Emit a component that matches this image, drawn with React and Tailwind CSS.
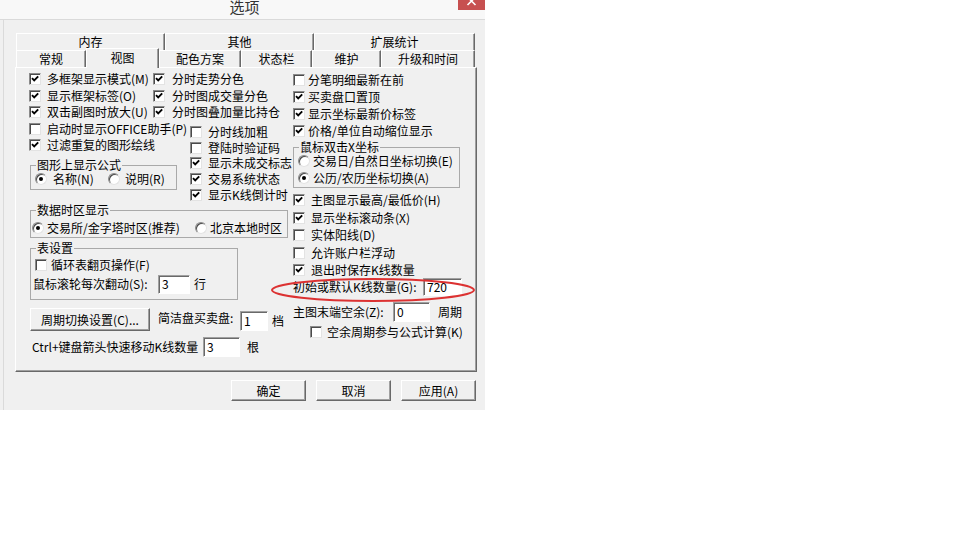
function Box({ on }) {
  return (
    <span className="w-[12px] h-[12px] shrink-0 bg-white border border-t-[#8a8a8a] border-l-[#8a8a8a] border-b-[#e3e3e3] border-r-[#e3e3e3] shadow-[inset_1px_1px_0_#4a4a4a] flex items-center justify-center">
      {on && (
        <svg width="10" height="10" viewBox="0 0 10 10">
          <path d="M2 4.2 4.2 6.4 8.2 2.4" fill="none" stroke="#000" strokeWidth="1.9" />
        </svg>
      )}
    </span>
  );
}

function Radio({ on }) {
  return (
    <span className="w-[12px] h-[12px] shrink-0 rounded-full bg-white border border-t-[#8a8a8a] border-l-[#8a8a8a] border-b-[#e3e3e3] border-r-[#e3e3e3] shadow-[inset_1px_1px_0_#4a4a4a] flex items-center justify-center">
      {on && <span className="w-[4px] h-[4px] rounded-full bg-black" />}
    </span>
  );
}

function Check({ on, label, gap = 'ml-[5px]', className = '' }) {
  return (
    <div className={`flex items-center shrink-0 ${className}`}>
      <Box on={on} />
      <span className={`whitespace-nowrap ${gap}`}>{label}</span>
    </div>
  );
}

function Field({ value, className = '' }) {
  return (
    <div className={`shrink-0 bg-white border border-t-[#a0a0a0] border-l-[#a0a0a0] border-b-white border-r-white shadow-[inset_1px_1px_0_#696969] pl-[3px] flex items-center ${className}`}>
      {value}
    </div>
  );
}

function Group({ title, className = '', children }) {
  return (
    <fieldset className={`border border-[#a9a9a9] shrink-0 ${className}`}>
      <legend className="ml-[5px] px-[1px] leading-[12px]">{title}</legend>
      {children}
    </fieldset>
  );
}

const TAB = 'flex items-center justify-center bg-[#f0f0f0] border-t border-l border-r border-t-white border-l-white border-r-[#696969] shadow-[inset_-1px_0_0_#a0a0a0]';
const BTN = 'w-[75px] h-full flex items-center justify-center bg-[#f0f0f0] border border-t-white border-l-white border-b-[#696969] border-r-[#696969] shadow-[inset_-1px_-1px_0_#a0a0a0]';

export default function App() {
  return (
    <div className="w-[960px] h-[540px] bg-white font-['Noto_Sans_CJK_SC',sans-serif] text-[12px] text-black leading-[14px]">
      <div className="w-[485px] h-[410px] bg-[#f0f0f0] flex flex-col">
        {/* title bar */}
        <div className="h-[20px] shrink-0 bg-[#f8f8f8] border-b border-[#dadada] grid grid-cols-[1fr_auto_1fr] items-start">
          <div />
          <div className="text-[15px] leading-[14px] text-[#333] ml-[4px]">选项</div>
          <div className="justify-self-end w-[27px] h-[10px] bg-[#c75050] flex justify-center overflow-hidden">
            <svg width="27" height="10" viewBox="0 0 27 10">
              <path d="M9.5 -3 17.5 5M17.5 -3 9.5 5" stroke="#fff" strokeWidth="1.6" />
            </svg>
          </div>
        </div>

        <div className="flex-1 ml-[3px] border-l border-[#dadada] flex flex-col">
          {/* tabs, back row */}
          <div className="mt-[13px] ml-[12px] w-[459px] h-[17px] flex">
            <div className={`${TAB} w-[149px]`}>内存</div>
            <div className={`${TAB} w-[149px]`}>其他</div>
            <div className={`${TAB} w-[161px]`}>扩展统计</div>
          </div>
          {/* tabs, front row */}
          <div className="ml-[12px] w-[459px] h-[17px] flex items-start">
            <div className={`${TAB} w-[70px] h-[17px]`}>常规</div>
            <div className={`${TAB} w-[73px] h-[20px] -mt-[2px] pb-[2px] relative z-10`}>视图</div>
            <div className={`${TAB} w-[82px] h-[17px]`}>配色方案</div>
            <div className={`${TAB} w-[71px] h-[17px]`}>状态栏</div>
            <div className={`${TAB} w-[69px] h-[17px]`}>维护</div>
            <div className={`${TAB} w-[94px] h-[17px]`}>升级和时间</div>
          </div>

          {/* page */}
          <div className="ml-[11px] w-[462px] h-[305px] shrink-0 relative flex border border-t-white border-l-white border-b-[#696969] border-r-[#696969] shadow-[inset_-1px_-1px_0_#a0a0a0]">
            {/* left area */}
            <div className="w-[274px] shrink-0 flex flex-col">
              <div className="mt-[3px] flex flex-col">
                <div className="h-[16.5px] flex items-center">
                  <Check on label="多框架显示模式(M)" gap="ml-[6px]" className="ml-[13px] w-[124px]" />
                  <Check on label="分时走势分色" gap="ml-[7px]" />
                </div>
                <div className="h-[16.5px] flex items-center">
                  <Check on label="显示框架标签(O)" gap="ml-[6px]" className="ml-[13px] w-[124px]" />
                  <Check on label="分时图成交量分色" gap="ml-[7px]" />
                </div>
                <div className="h-[16.5px] flex items-center">
                  <Check on label="双击副图时放大(U)" gap="ml-[6px]" className="ml-[13px] w-[124px]" />
                  <Check on label="分时图叠加量比持仓" gap="ml-[7px]" />
                </div>
              </div>

              <div className="h-[83.5px] shrink-0 flex">
                <div className="w-[174px] shrink-0 flex flex-col">
                  <div className="h-[16.5px] flex items-center">
                    <Check label="启动时显示OFFICE助手(P)" gap="ml-[6px]" className="ml-[13px]" />
                  </div>
                  <div className="h-[16.5px] flex items-center">
                    <Check on label="过滤重复的图形绘线" gap="ml-[6px]" className="ml-[13px]" />
                  </div>
                  <Group title="图形上显示公式" className="mt-[5.5px] ml-[14px] w-[147px] pb-[2px]">
                    <div className="h-[16px] flex items-center">
                      <div className="w-[77px] flex items-center">
                        <span className="ml-[4px]"><Radio on /></span>
                        <span className="ml-[6px]">名称(N)</span>
                      </div>
                      <Radio />
                      <span className="ml-[5px]">说明(R)</span>
                    </div>
                  </Group>
                </div>
                <div className="mt-[3.5px] flex flex-col">
                  <div className="h-[15.75px] flex items-center"><Check label="分时线加粗" gap="ml-[6px]" /></div>
                  <div className="h-[15.75px] flex items-center"><Check label="登陆时验证码" gap="ml-[6px]" /></div>
                  <div className="h-[15.75px] flex items-center"><Check on label="显示未成交标志" gap="ml-[6px]" /></div>
                  <div className="h-[15.75px] flex items-center"><Check on label="交易系统状态" gap="ml-[6px]" /></div>
                  <div className="h-[15.75px] flex items-center"><Check on label="显示K线倒计时" gap="ml-[6px]" /></div>
                </div>
              </div>

              <Group title="数据时区显示" className="ml-[14px] w-[258px] pb-[1px]">
                <div className="mt-[4px] h-[16px] flex items-center">
                  <div className="w-[164px] flex items-center">
                    <span className="ml-[1px]"><Radio on /></span>
                    <span className="ml-[3px] whitespace-nowrap">交易所/金字塔时区(推荐)</span>
                  </div>
                  <Radio />
                  <span className="ml-[3px] whitespace-nowrap">北京本地时区</span>
                </div>
              </Group>

              <Group title="表设置" className="mt-[4px] ml-[14px] w-[208px] pb-[5px]">
                <div className="mt-[3px] h-[16px] flex items-center">
                  <Check label="循环表翻页操作(F)" gap="ml-[4px]" className="ml-[4px]" />
                </div>
                <div className="mt-[1px] h-[20px] flex items-center">
                  <span className="ml-[2px] w-[125px] whitespace-nowrap">鼠标滚轮每次翻动(S):</span>
                  <Field value="3" className="w-[32px] h-[19px]" />
                  <span className="ml-[4px]">行</span>
                </div>
              </Group>

              <div className="mt-[8px] h-[23px] flex items-start">
                <div className={`${BTN} ml-[14px] w-[120px] h-[20px]`}>周期切换设置(C)...</div>
                <span className="mt-[3px] ml-[8px] w-[82px] whitespace-nowrap">简洁盘买卖盘:</span>
                <Field value="1" className="mt-[3px] w-[28px] h-[20px]" />
                <span className="mt-[6px] ml-[4px]">档</span>
              </div>

              <div className="mt-[6px] h-[20px] flex items-center">
                <span className="ml-[16px] w-[171px] whitespace-nowrap">Ctrl+键盘箭头快速移动K线数量</span>
                <Field value="3" className="w-[37px] h-[20px]" />
                <span className="ml-[7px]">根</span>
              </div>
            </div>

            {/* right area */}
            <div className="flex-1 flex flex-col">
              <div className="mt-[3px] flex flex-col">
                <div className="h-[17px] flex items-center"><Check label="分笔明细最新在前" gap="ml-[3px]" className="ml-[3px]" /></div>
                <div className="h-[17px] flex items-center"><Check on label="买卖盘口置顶" gap="ml-[3px]" className="ml-[3px]" /></div>
                <div className="h-[17px] flex items-center"><Check on label="显示坐标最新价标签" gap="ml-[3px]" className="ml-[3px]" /></div>
                <div className="h-[17px] flex items-center"><Check on label="价格/单位自动缩位显示" gap="ml-[3px]" className="ml-[3px]" /></div>
              </div>

              <Group title="鼠标双击X坐标" className="mt-[2px] ml-[3px] w-[167px] pb-[1px]">
                <div className="-mt-[1px] h-[17px] flex items-center">
                  <span className="ml-[4px]"><Radio /></span>
                  <span className="ml-[3px] whitespace-nowrap">交易日/自然日坐标切换(E)</span>
                </div>
                <div className="h-[17px] flex items-center">
                  <span className="ml-[4px]"><Radio on /></span>
                  <span className="ml-[3px] whitespace-nowrap">公历/农历坐标切换(A)</span>
                </div>
              </Group>

              <div className="mt-[3.5px] flex flex-col">
                <div className="h-[17.5px] flex items-center"><Check on label="主图显示最高/最低价(H)" gap="ml-[6px]" className="ml-[3px]" /></div>
                <div className="h-[17.5px] flex items-center"><Check on label="显示坐标滚动条(X)" gap="ml-[6px]" className="ml-[3px]" /></div>
                <div className="h-[17.5px] flex items-center"><Check label="实体阳线(D)" gap="ml-[6px]" className="ml-[3px]" /></div>
                <div className="h-[17.5px] flex items-center"><Check label="允许账户栏浮动" gap="ml-[6px]" className="ml-[3px]" /></div>
                <div className="h-[17.5px] flex items-center"><Check on label="退出时保存K线数量" gap="ml-[6px]" className="ml-[3px]" /></div>
              </div>

              <div className="-mt-[1px] h-[18px] flex items-center">
                <span className="ml-[3px] w-[130px] whitespace-nowrap">初始或默认K线数量(G):</span>
                <Field value="720" className="w-[39px] h-[18px]" />
              </div>

              <div className="mt-[6px] h-[20px] flex items-center">
                <span className="ml-[3px] w-[100px] whitespace-nowrap">主图末端空余(Z):</span>
                <Field value="0" className="w-[37px] h-[20px]" />
                <span className="ml-[8px]">周期</span>
              </div>

              <div className="mt-[2px] h-[16px] flex items-center">
                <Check label="空余周期参与公式计算(K)" gap="ml-[5px]" className="ml-[20px]" />
              </div>
            </div>

            {/* red annotation ellipse */}
            <svg className="absolute left-[254px] top-[209px] pointer-events-none" width="206" height="26" viewBox="0 0 206 26">
              <ellipse cx="103" cy="13" rx="101" ry="11" fill="none" stroke="#dc3232" strokeWidth="2" />
            </svg>
          </div>

          {/* dialog buttons */}
          <div className="mt-[8px] h-[21px] flex justify-end gap-[10px] pr-[9px]">
            <div className={`${BTN} border-[#3c3c3c] border-t-[#a0a0a0] border-l-[#a0a0a0]`}>确定</div>
            <div className={BTN}>取消</div>
            <div className={BTN}>应用(A)</div>
          </div>
        </div>
      </div>
    </div>
  );
}
